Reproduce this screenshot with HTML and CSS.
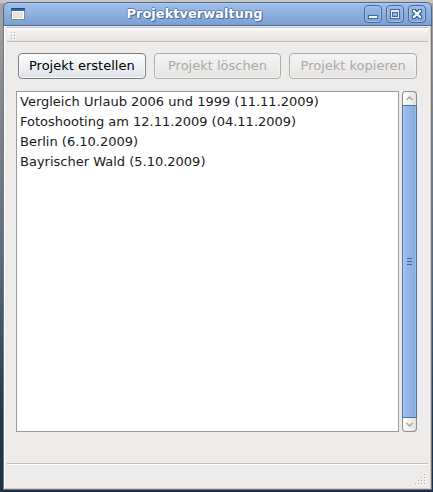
FILE: index.html
```html
<!DOCTYPE html>
<html lang="de">
<head>
<meta charset="utf-8">
<title>Projektverwaltung</title>
<link rel="stylesheet" href="styles.css">
</head>
<body>
<main class="window">
  <header class="titlebar">
    <svg class="app-icon" width="14" height="12" viewBox="0 0 14 12" shape-rendering="crispEdges" aria-hidden="true">
      <path fill="#888a85" d="M0 0h14v12H0z"/>
      <path fill="#fff" d="M1 3h12v8H1z"/>
      <path fill="#e3e4e0" d="M2 4h10v6H2z"/>
      <path fill="#204a87" d="M0 0h14v1H0z"/>
      <path fill="#3465a4" d="M0 1h14v2H0z"/>
    </svg>
    <h1 class="title">Projektverwaltung</h1>
    <div class="window-controls">
      <button class="control" type="button" aria-label="Minimieren">
        <svg width="14" height="14" viewBox="0 0 14 14" shape-rendering="crispEdges"><path fill="#47699c" d="M2 8h10v4H2z"/><path fill="#f4f7fb" d="M3 9h8v2H3z"/></svg>
      </button>
      <button class="control" type="button" aria-label="Maximieren">
        <svg width="14" height="14" viewBox="0 0 14 14" shape-rendering="crispEdges"><path fill="#47699c" d="M2 2h10v10H2z"/><path fill="#e6eefa" d="M3 3h8v8H3z"/><path fill="#47699c" d="M4 5h6v5H4z"/><path fill="#8fb1de" d="M5 6h4v3H5z"/></svg>
      </button>
      <button class="control" type="button" aria-label="Schließen">
        <svg width="14" height="14" viewBox="0 0 14 14" shape-rendering="crispEdges"><path fill="#47699c" d="M2 2h4v1h2V2h4v4h-1v2h1v4H8v-1H6v1H2V8h1V6H2z"/><path fill="#f4f7fb" d="M3 3h2v1h1v1h2V4h1V3h2v2h-1v1H9v2h1v1h1v2H9v-1H8V9H6v1H5v1H3V9h1V8h1V6H4V5H3z"/></svg>
      </button>
    </div>
  </header>
  <div class="toolbar">
    <svg width="5" height="8" viewBox="0 0 5 8" shape-rendering="crispEdges" aria-hidden="true"><path fill="#b5b3b0" d="M0 0h1v1H0zM3 0h1v1H3zM0 3h1v1H0zM3 3h1v1H3zM0 6h1v1H0zM3 6h1v1H3z"/><path fill="#fff" d="M1 1h1v1H1zM4 1h1v1H4zM1 4h1v1H1zM4 4h1v1H4zM1 7h1v1H1zM4 7h1v1H4z"/></svg>
  </div>
  <div class="actions">
    <button class="button" type="button">Projekt erstellen</button>
    <button class="button" type="button" disabled>Projekt löschen</button>
    <button class="button" type="button" disabled>Projekt kopieren</button>
  </div>
  <section class="projects">
    <ul class="list">
      <li>Vergleich Urlaub 2006 und 1999 (11.11.2009)</li>
      <li>Fotoshooting am 12.11.2009 (04.11.2009)</li>
      <li>Berlin (6.10.2009)</li>
      <li>Bayrischer Wald (5.10.2009)</li>
    </ul>
    <div class="scrollbar">
      <button class="arrow arrow-up" type="button" aria-label="Nach oben">
        <svg width="7" height="5" viewBox="0 0 7 5"><path fill="none" stroke="#aaa8a5" stroke-width="1.500" d="M.5 4l3-3 3 3"/></svg>
      </button>
      <div class="thumb">
        <svg width="5" height="7" viewBox="0 0 5 7" shape-rendering="crispEdges" aria-hidden="true"><path fill="#426694" d="M0 0h5v1H0zM0 3h5v1H0zM0 6h5v1H0z"/></svg>
      </div>
      <button class="arrow arrow-down" type="button" aria-label="Nach unten">
        <svg width="7" height="5" viewBox="0 0 7 5"><path fill="none" stroke="#aaa8a5" stroke-width="1.500" d="M.5 1l3 3 3-3"/></svg>
      </button>
    </div>
  </section>
  <footer class="statusbar">
    <svg width="11" height="11" viewBox="0 0 11 11" shape-rendering="crispEdges" aria-hidden="true"><path fill="#b0aeab" d="M9 0h1v1H9zM6 3h1v1H6zM9 3h1v1H9zM3 6h1v1H3zM6 6h1v1H6zM9 6h1v1H9zM0 9h1v1H0zM3 9h1v1H3zM6 9h1v1H6zM9 9h1v1H9z"/><path fill="#fff" d="M10 1h1v1h-1zM7 4h1v1H7zM10 4h1v1h-1zM4 7h1v1H4zM7 7h1v1H7zM10 7h1v1h-1zM1 10h1v1H1zM4 10h1v1H4zM7 10h1v1H7zM10 10h1v1h-1z"/></svg>
  </footer>
</main>
</body>
</html>
```
FILE: styles.css
```css
* {
  box-sizing: border-box;
}

body {
  display: flex;
  min-height: 100vh;
  margin: 0;
  padding: 2px 1px 2px 3px;
  background: linear-gradient(#c9c5c1, #c9c5c1) top / 100% 3px no-repeat,
    linear-gradient(#aaa7a5, #858b93 18%, #56687e 55%, #1c3852 85%, #18324b);
  font: 13px/20px "DejaVu Sans", sans-serif;
  color: #1a1a1a;
}

button {
  padding: 0;
  font: inherit;
}

svg {
  display: block;
}

.window {
  display: flex;
  flex: 1;
  flex-direction: column;
  min-width: 0;
  border: 1px solid #777573;
  border-radius: 6px 6px 0 0;
  background: #edeceb;
  box-shadow: inset 1px 0 #fff, inset -1px -1px #cfcbc7;
}

.titlebar {
  display: flex;
  align-items: center;
  height: 24px;
  margin: -1px -1px 0;
  padding: 0 5px 0 7px;
  border: 1px solid #466898;
  border-radius: 6px 6px 0 0;
  background: linear-gradient(#a0bfe8, #92b3e0 40%, #7ba1d2);
  box-shadow: inset 0 1px #b1cbed;
}

.title {
  flex: 1;
  margin: 0;
  font-size: 13px;
  line-height: 20px;
  text-align: center;
  color: #fff;
  text-shadow: 1px 1px #456c9f, -1px 0 #5a80b4, 0 -1px #5a80b4, 1px 0 #5a80b4;
}

.window-controls {
  display: flex;
  gap: 4px;
}

.control {
  display: grid;
  place-items: center;
  width: 18px;
  height: 18px;
  border: 1px solid #47699c;
  border-radius: 4px;
  background: linear-gradient(#9bbbe6, #7ba1d2);
  box-shadow: inset 0 0 0 1px #a2bfe6;
}

.toolbar {
  height: 15px;
  margin: 1px 3px 0;
  padding: 4px;
  border-top: 1px solid #c4c2bf;
  border-bottom: 1px solid #bfbdba;
  background: linear-gradient(#fff, #f5f4f3 20%, #e5e4e2);
}

.actions {
  display: grid;
  grid-template-columns: repeat(3, 1fr);
  gap: 8px;
  margin: 11px 14px 0;
}

.button {
  height: 26px;
  border: 1px solid #7e7d7b;
  border-radius: 4px;
  background: linear-gradient(#fcfdfe, #eef1f5 50%, #dce2ea);
  box-shadow: inset 0 0 0 1px #f8fafc;
  color: #000;
  white-space: nowrap;
}

.button:disabled {
  border-color: #b0aeab;
  background: linear-gradient(#f6f5f5, #e5e4e3);
  box-shadow: inset 0 0 0 1px #f2f1f0;
  color: #aaa8a6;
}

.projects {
  display: flex;
  flex: 1;
  gap: 3px;
  margin: 12px 14px 0 12px;
}

.list {
  flex: 1;
  margin: 0;
  padding: 0 3px;
  border: 1px solid #9d9b98;
  background: #fff;
  list-style: none;
}

.scrollbar {
  display: flex;
  flex-direction: column;
  width: 15px;
}

.arrow {
  display: grid;
  place-items: center;
  height: 14px;
  border: 1px solid #8e8c89;
  background: linear-gradient(90deg, #fff, #e3e2e0);
}

.arrow-up {
  border-bottom: 0;
  border-radius: 4px 4px 0 0;
}

.arrow-down {
  border-top: 0;
  border-radius: 0 0 4px 4px;
}

.thumb {
  display: grid;
  flex: 1;
  place-items: center;
  border: 1px solid #4d74a8;
  background: linear-gradient(90deg, #9fc0eb, #84aadc);
  box-shadow: inset 1px 0 #b1cdf1, inset -1px 0 #9abbe7;
}

.statusbar {
  display: flex;
  align-items: flex-end;
  justify-content: flex-end;
  height: 26px;
  margin: 31px 3px 0;
  padding: 0 2px 4px;
  border-top: 1px solid #bfbdba;
  box-shadow: inset 0 1px #fff;
}
```
